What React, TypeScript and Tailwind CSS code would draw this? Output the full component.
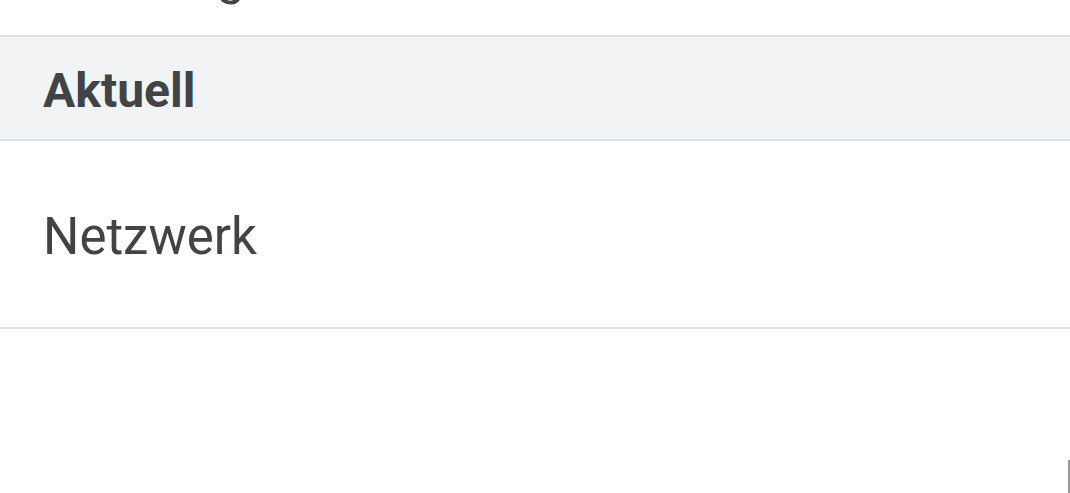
export default function App() {
  return (
    <div
      className="relative h-[493px] w-full overflow-hidden bg-white text-[#414345]"
      style={{ fontFamily: "Roboto, 'Noto Sans', sans-serif" }}
    >
      {/* previous row, scrolled mostly out of view */}
      <div className="h-[35px] overflow-hidden">
        <div className="-mt-[54px] pl-[43px] text-[51px] leading-[60px]">
          Werbung
        </div>
      </div>

      <div className="flex h-[106px] items-center border-y-2 border-[#dfe0e2] bg-[#f2f3f5] pl-[43px] pt-[6px]">
        <span className="text-[48px] font-bold">Aktuell</span>
      </div>

      <div className="flex h-[188px] items-center border-b-2 border-[#e3e3e3] pl-[43px] pt-[6px]">
        <span className="text-[51px]">Netzwerk</span>
      </div>

      {/* scrollbar thumb */}
      <div className="absolute bottom-0 right-0 h-[33px] w-[2px] bg-[#9a9a9a]" />
    </div>
  );
}
